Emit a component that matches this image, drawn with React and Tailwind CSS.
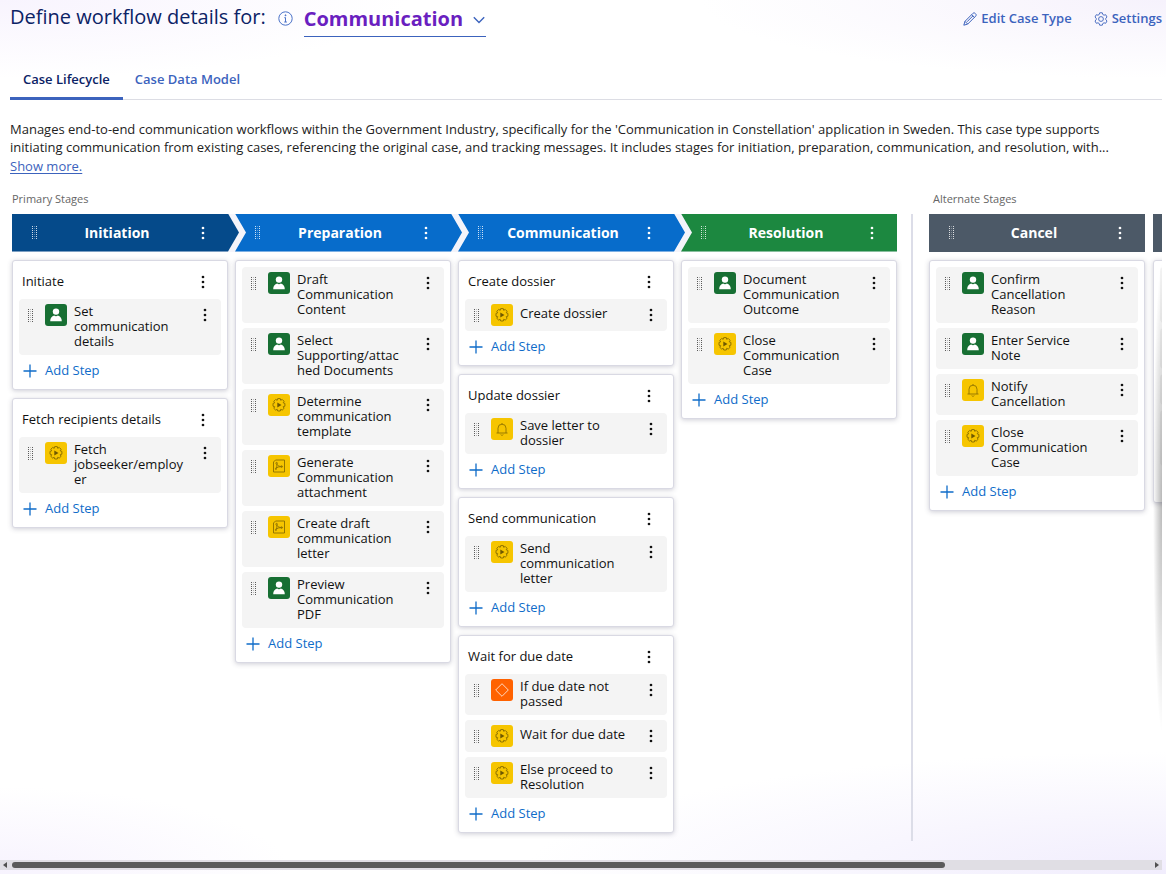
import clsx from "clsx";

const primaryStages = [
  {
    name: "Initiation",
    color: "bg-[#054a8a]",
    processes: [
      {
        name: "Initiate",
        steps: [{ type: "user", name: "Set communication details" }],
      },
      {
        name: "Fetch recipients details",
        steps: [{ type: "auto", name: "Fetch jobseeker/employer" }],
      },
    ],
  },
  {
    name: "Preparation",
    color: "bg-[#076ccb]",
    processes: [
      {
        steps: [
          { type: "user", name: "Draft Communication Content" },
          { type: "user", name: "Select Supporting/attached Documents" },
          { type: "auto", name: "Determine communication template" },
          { type: "pdf", name: "Generate Communication attachment" },
          { type: "pdf", name: "Create draft communication letter" },
          { type: "user", name: "Preview Communication PDF" },
        ],
      },
    ],
  },
  {
    name: "Communication",
    color: "bg-[#076ccb]",
    processes: [
      {
        name: "Create dossier",
        steps: [{ type: "auto", name: "Create dossier" }],
      },
      {
        name: "Update dossier",
        steps: [{ type: "notify", name: "Save letter to dossier" }],
      },
      {
        name: "Send communication",
        steps: [{ type: "auto", name: "Send communication letter" }],
      },
      {
        name: "Wait for due date",
        steps: [
          { type: "decision", name: "If due date not passed" },
          { type: "auto", name: "Wait for due date" },
          { type: "auto", name: "Else proceed to Resolution" },
        ],
      },
    ],
  },
  {
    name: "Resolution",
    color: "bg-[#1c8840]",
    processes: [
      {
        steps: [
          { type: "user", name: "Document Communication Outcome" },
          { type: "auto", name: "Close Communication Case" },
        ],
      },
    ],
  },
];

const cancelStage = {
  name: "Cancel",
  color: "bg-[#4c5967]",
  processes: [
    {
      steps: [
        { type: "user", name: "Confirm Cancellation Reason" },
        { type: "user", name: "Enter Service Note" },
        { type: "notify", name: "Notify Cancellation" },
        { type: "auto", name: "Close Communication Case" },
      ],
    },
  ],
};

const stepColors = {
  user: "bg-[#176f33]",
  auto: "bg-[#f6c500]",
  pdf: "bg-[#f6c500]",
  notify: "bg-[#f6c500]",
  decision: "bg-[#ff6200]",
};

const Grip = () => (
  <svg width="6" height="13" viewBox="0 0 6 13" fill="currentColor" className="shrink-0">
    {[0, 2, 4, 6, 8, 10, 12].map((y) => (
      <g key={y}>
        <rect x="0" y={y} width="1" height="1" opacity="0.8" />
        <rect x="2" y={y} width="1" height="1" opacity="0.3" />
        <rect x="4" y={y} width="1" height="1" opacity="0.8" />
      </g>
    ))}
  </svg>
);

const MoreButton = ({ label, className }) => (
  <button
    type="button"
    aria-label={label}
    className={clsx("flex h-5 w-[14px] shrink-0 items-center justify-center", className)}
  >
    <svg width="4" height="14" viewBox="0 0 4 14" fill="currentColor">
      <circle cx="2" cy="2" r="1.35" />
      <circle cx="2" cy="7" r="1.35" />
      <circle cx="2" cy="12" r="1.35" />
    </svg>
  </button>
);

const StepGlyph = ({ type }) => {
  if (type === "user") {
    return (
      <svg width="14" height="14" viewBox="0 0 14 14" fill="#fff">
        <circle cx="7" cy="3.6" r="3.2" />
        <path d="M1.2 13.2c0-2.9 1.6-4.9 3.9-5.6.6.4 1.2.6 1.9.6s1.3-.2 1.9-.6c2.3.7 3.9 2.7 3.9 5.6z" />
      </svg>
    );
  }
  if (type === "notify") {
    return (
      <svg width="14" height="14" viewBox="0 0 14 14" fill="none" stroke="#8f7300" strokeWidth="0.9">
        <path d="M1.500 11h11M3 11V6.200a4 4 0 0 1 8 0V11M7 2.200V1M5.800 12.600c.3.5.7.7 1.200.7s.9-.2 1.200-.7" />
      </svg>
    );
  }
  if (type === "pdf") {
    return (
      <svg width="14" height="14" viewBox="0 0 14 14" fill="none" stroke="#8a6f00" strokeWidth="0.9">
        <path d="M3.500 1h9v12h-11V3z" />
        <circle cx="4.600" cy="4.200" r=".8" />
        <path d="M4.900 5c.2 1.400 0 3-.7 4.300M5 5.400c.8 1.300 2.200 2 4.200 2.200M4.400 8.900c1.400-.9 3-1.300 4.800-1.300" />
        <path d="M3.300 9l.2 1.700 1.500-.8zM9.200 6.500l1.800 1.100-1.800 1.100z" fill="#8a6f00" strokeWidth="0.4" />
      </svg>
    );
  }
  if (type === "decision") {
    return (
      <svg width="14" height="14" viewBox="0 0 14 14" fill="none" stroke="#ffd9c0">
        <path d="M7 .7 13.300 7 7 13.300.7 7z" />
      </svg>
    );
  }
  return (
    <svg width="14" height="14" viewBox="0 0 14 14" fill="none" stroke="#846a00" strokeWidth="0.9">
      <path d="M5.700.6h2.600l.4 1.700 1.500-.9 1.900 1.900-.9 1.500 1.700.6v2.800l-1.700.5.9 1.600-1.900 1.800-1.500-.8-.4 1.700H5.700l-.5-1.700-1.500.8-1.900-1.800.9-1.600L1 8.200V5.400l1.700-.6-.9-1.500 1.900-1.900 1.500.9z" />
      <path d="M5.300 4.500v5L9.500 7z" fill="#6e5800" stroke="none" />
    </svg>
  );
};

const Step = ({ step }) => (
  <li className="flex items-start rounded bg-[#f4f4f4] px-[9px] py-[5px]">
    <span className="mt-[5px] mr-[11px] text-[#333]">
      <Grip />
    </span>
    <span
      className={clsx(
        "flex size-[22px] shrink-0 items-center justify-center rounded-[3px]",
        stepColors[step.type]
      )}
    >
      <StepGlyph type={step.type} />
    </span>
    <span className="ml-[7px] mb-px flex min-h-5 w-[109px] items-center leading-[15px]">
      <span className="w-full wrap-break-word">{step.name}</span>
    </span>
    <MoreButton label={`Actions for ${step.name}`} className="mt-px ml-auto" />
  </li>
);

const ProcessCard = ({ process }) => (
  <section
    className={clsx(
      "rounded-[3px] border border-[#d9d9e3] bg-white px-[6px] shadow-[0_1px_5px_rgba(60,60,90,0.25)]",
      !process.name && "pt-[6px]"
    )}
  >
    {process.name && (
      <header className="flex h-[38px] items-center justify-between pt-1 pl-[3px] pr-[11px]">
        <h3>{process.name}</h3>
        <MoreButton label={`Actions for ${process.name}`} />
      </header>
    )}
    <ul className="flex flex-col gap-[5px]">
      {process.steps.map((step) => (
        <Step key={step.name} step={step} />
      ))}
    </ul>
    <button type="button" className="flex h-[34px] items-center gap-2 pl-1 pb-[2px] text-[#0f6cc9]">
      <svg width="14" height="14" viewBox="0 0 14 14" fill="none" stroke="currentColor">
        <path d="M7 .5v13M.5 7h13" strokeWidth="1.3" />
      </svg>
      Add Step
    </button>
  </section>
);

const StageHeader = ({ stage, first, last }) => (
  <div className="w-[216px] shrink-0">
    <div
      className={clsx(
        "h-[38px] text-white",
        stage.color,
        !last && "-mr-[11px]",
        !last &&
          first &&
          "[clip-path:polygon(0_0,calc(100%_-_11px)_0,100%_50%,calc(100%_-_11px)_100%,0_100%)]",
        !last &&
          !first &&
          "[clip-path:polygon(0_0,calc(100%_-_11px)_0,100%_50%,calc(100%_-_11px)_100%,0_100%,11px_50%)]",
        last && !first && "[clip-path:polygon(0_0,100%_0,100%_100%,0_100%,11px_50%)]"
      )}
    >
      <div className="flex h-full w-[216px] items-center pl-5 pr-[18px]">
        <Grip />
        <h2 className="flex-1 text-center text-sm font-bold">{stage.name}</h2>
        <MoreButton label={`Actions for ${stage.name}`} />
      </div>
    </div>
  </div>
);

const StageColumn = ({ stage }) => (
  <div className="flex w-[216px] shrink-0 flex-col gap-2">
    {stage.processes.map((process, i) => (
      <ProcessCard key={i} process={process} />
    ))}
  </div>
);

const PageHeader = () => (
  <header className="flex items-start justify-between">
    <div className="flex items-start">
      <h1 className="pt-[3px] text-xl leading-7 text-[#0b2265]">Define workflow details for:</h1>
      <button type="button" aria-label="About case types" className="mt-[11px] ml-3 text-[#4a72c8]">
        <svg width="15" height="15" viewBox="0 0 15 15" fill="none" stroke="currentColor">
          <circle cx="7.5" cy="7.5" r="6.7" />
          <path d="M7.500 6.500v4.500M6.300 6.700h1.200M6.200 11h2.700" />
          <circle cx="7.500" cy="4.300" r=".5" fill="currentColor" />
        </svg>
      </button>
      <div className="ml-[11px] flex w-[182px] items-center border-b border-[#3c63bd] pt-[5px]">
        <select
          aria-label="Case type"
          className="h-[31px] min-w-0 flex-1 appearance-none bg-transparent pb-1 text-xl font-bold text-[#6a1fc0] outline-none"
        >
          <option>Communication</option>
        </select>
        <svg width="12" height="8" viewBox="0 0 12 8" fill="none" stroke="#3c63bd" strokeWidth="1.4" className="mr-px mb-px">
          <path d="M.8 1.200 6 6.500l5.200-5.300" />
        </svg>
      </div>
    </div>
    <div className="flex gap-[22px] pt-[9px] font-semibold text-[#3c63bd]">
      <button type="button" className="flex h-5 items-center gap-1">
        <svg width="14" height="14" viewBox="0 0 14 14" fill="none" stroke="currentColor">
          <path d="M.8 13.200 2 9.300 9.900 1.400c.7-.7 1.700-.7 2.300 0l.5.5c.6.600.6 1.600 0 2.200l-8 8zM8.600 2.700l2.800 2.800M2 9.300l2.700 2.800M4 9.800l6-6" />
        </svg>
        Edit Case Type
      </button>
      <button type="button" className="flex h-5 items-center gap-1">
        <svg width="14" height="14" viewBox="0 0 14 14" fill="none" stroke="currentColor" strokeWidth="0.9">
          <path d="M5.700.8h2.600l.5 1.700 1.200.7 1.700-.5L13 5l-1.200 1.300v1.400L13 9l-1.300 2.300-1.700-.5-1.200.7-.5 1.700H5.700l-.5-1.700-1.200-.7-1.700.5L1 9l1.200-1.300V6.300L1 5l1.300-2.300 1.700.5 1.200-.7z" />
          <circle cx="7" cy="7" r="2.4" />
        </svg>
        Settings
      </button>
    </div>
  </header>
);

const App = () => {
  return (
    <div className="flex min-h-screen flex-col overflow-hidden bg-[radial-gradient(55%_14%_at_100%_100%,#f1edfd,transparent),radial-gradient(25%_10%_at_0%_100%,#f7f3fe,transparent),radial-gradient(40%_9%_at_100%_0%,#f6f2fc,transparent),radial-gradient(35%_9%_at_0%_0%,#f8f4fe,transparent)] pr-1 font-['Open_Sans',sans-serif] text-[13px] text-[#111]">
      <div className="pl-[10px]">
        <PageHeader />

        <nav className="mt-[22px] flex border-b border-[#dcdde4] font-semibold">
          <a
            href="#lifecycle"
            aria-current="page"
            className="-mb-px flex h-[41px] items-center border-b-3 border-[#3c63bd] px-[13px] pt-[3px] text-[#0b2265]"
          >
            Case Lifecycle
          </a>
          <a
            href="#data-model"
            className="-mb-px flex h-[41px] items-center border-b-3 border-transparent pt-[3px] text-[#3c63bd] px-3"
          >
            Case Data Model
          </a>
        </nav>

        <div className="pt-5">
          <p className="line-clamp-2 max-w-[1110px] leading-[18px] text-[#222]">
            Manages end-to-end communication workflows within the Government Industry, specifically for the
            'Communication in Constellation' application in Sweden. This case type supports initiating communication
            from existing cases, referencing the original case, and tracking messages. It includes stages for
            initiation, preparation, communication, and resolution, with...
          </p>
          <a href="#more" className="inline-block leading-5 text-[#3c63bd] underline underline-offset-2">
            Show more.
          </a>
        </div>
      </div>

      <main className="relative mt-[13px] flex overflow-hidden pl-3">
        <section className="shrink-0 pb-2">
          <p className="h-[24px] text-[11px] leading-[18px] text-[#666]">Primary Stages</p>
          <div className="flex gap-[7px] bg-[#f4f4fa]">
            {primaryStages.map((stage, i) => (
              <StageHeader
                key={stage.name}
                stage={stage}
                first={i === 0}
                last={i === primaryStages.length - 1}
              />
            ))}
          </div>
          <div className="mt-2 flex gap-[7px]">
            {primaryStages.map((stage) => (
              <StageColumn key={stage.name} stage={stage} />
            ))}
          </div>
        </section>

        <div className="mt-[24px] ml-[14px] w-[2px] shrink-0 bg-[#dcdde8]" />

        <section className="ml-4 shrink-0">
          <p className="h-[24px] pl-1 text-[11px] leading-[18px] text-[#666]">Alternate Stages</p>
          <div className="flex gap-2">
            <StageHeader stage={cancelStage} first last />
            <div className="w-[216px] bg-[#4c5967]" />
          </div>
          <div className="mt-2 flex items-start gap-2">
            <StageColumn stage={cancelStage} />
            <div className="flex w-[216px] flex-col gap-[5px] rounded-[3px] border border-[#d9d9e3] bg-white px-[6px] pt-[6px] pb-[36px] shadow-[0_1px_5px_rgba(60,60,90,0.25)]">
              <div className="h-14 rounded bg-[#f4f4f4]" />
              <div className="h-[41px] rounded bg-[#f4f4f4]" />
              <div className="h-[31px] rounded bg-[#f4f4f4]" />
              <div className="h-14 rounded bg-[#f4f4f4]" />
            </div>
          </div>
        </section>

        {/* shade hinting that the board scrolls further right */}
        <div className="pointer-events-none absolute top-[72px] right-0 h-[470px] w-[9px] bg-[radial-gradient(100%_50%_at_100%_50%,rgba(0,0,0,0.28),transparent)]" />
      </main>

      <div className="mt-[19px] mb-[3px] flex h-[10px] items-center justify-between bg-[#e0dee4] px-[3px]">
        <svg width="4" height="6" viewBox="0 0 4 6" fill="#505050">
          <path d="M4 0v6L0 3z" />
        </svg>
        <div className="mx-[5px] flex-1">
          <div className="h-[6px] w-[82%] rounded-full bg-[#5b5b5b]" />
        </div>
        <svg width="4" height="6" viewBox="0 0 4 6" fill="#505050">
          <path d="M0 0v6l4-3z" />
        </svg>
      </div>
    </div>
  );
};

export default App;
